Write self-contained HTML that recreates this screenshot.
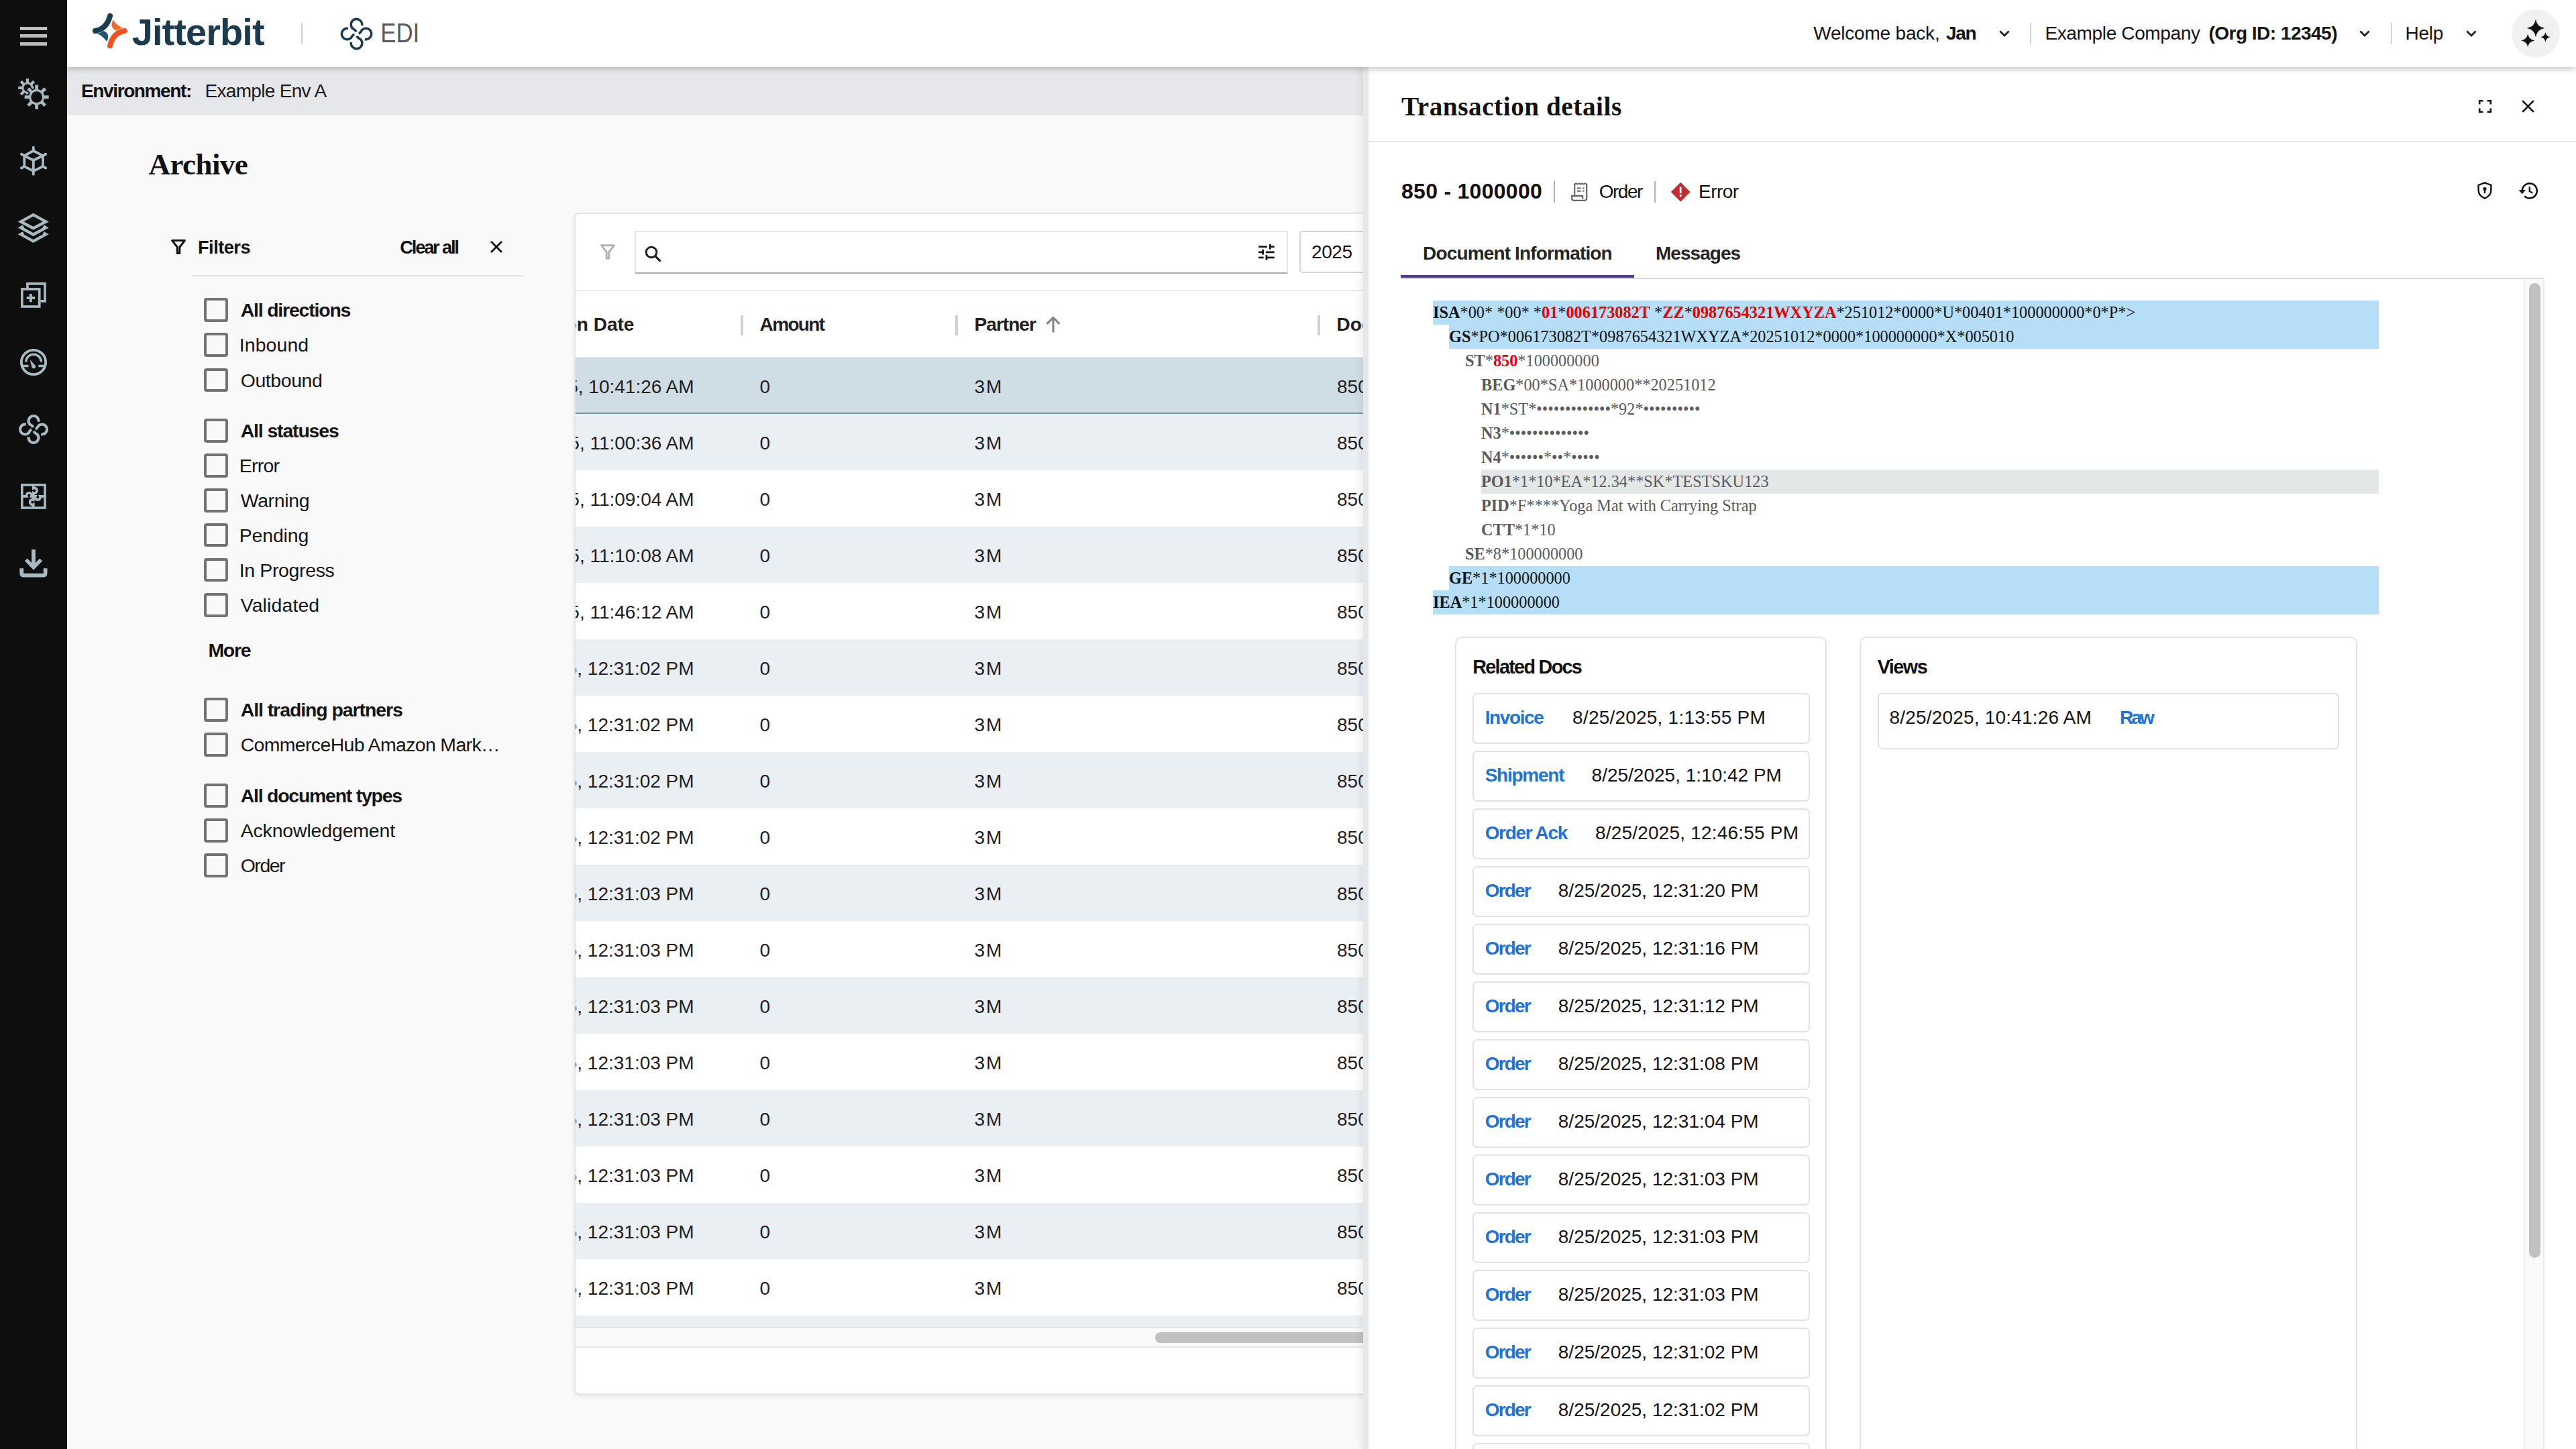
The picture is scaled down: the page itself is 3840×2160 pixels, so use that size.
<!DOCTYPE html><html><head><meta charset="utf-8"><style>
html,body{margin:0;padding:0;width:3840px;height:2160px;overflow:hidden;background:#f9f9f9;}
#root{zoom:2;position:relative;width:1920px;height:1080px;overflow:hidden;font-family:'Liberation Sans',sans-serif;color:#141414;background:#f9f9f9;}
.t{position:absolute;white-space:nowrap;line-height:1;}
svg{position:absolute;overflow:visible;}
</style></head><body><div id="root"><div style="position:absolute;left:0;top:0;width:50px;height:1080px;background:#0e0e0e;z-index:6"><div style="position:absolute;left:15px;top:20.0px;width:20px;height:2.5px;background:#bdbec0"></div><div style="position:absolute;left:15px;top:25.7px;width:20px;height:2.5px;background:#bdbec0"></div><div style="position:absolute;left:15px;top:31.4px;width:20px;height:2.5px;background:#bdbec0"></div><svg style="left:13px;top:58px" width="24" height="24" viewBox="0 0 24 24"><circle cx="7.47" cy="7.47" r="3.55" fill="none" stroke="#a7b9c1" stroke-width="1.5"/><rect x="6.42" y="0.5699999999999994" width="2.1" height="3.0000000000000004" fill="#a7b9c1" transform="rotate(0 7.47 7.47)"/><rect x="6.42" y="0.5699999999999994" width="2.1" height="3.0000000000000004" fill="#a7b9c1" transform="rotate(45 7.47 7.47)"/><rect x="6.42" y="0.5699999999999994" width="2.1" height="3.0000000000000004" fill="#a7b9c1" transform="rotate(90 7.47 7.47)"/><rect x="6.42" y="0.5699999999999994" width="2.1" height="3.0000000000000004" fill="#a7b9c1" transform="rotate(135 7.47 7.47)"/><rect x="6.42" y="0.5699999999999994" width="2.1" height="3.0000000000000004" fill="#a7b9c1" transform="rotate(180 7.47 7.47)"/><rect x="6.42" y="0.5699999999999994" width="2.1" height="3.0000000000000004" fill="#a7b9c1" transform="rotate(225 7.47 7.47)"/><rect x="6.42" y="0.5699999999999994" width="2.1" height="3.0000000000000004" fill="#a7b9c1" transform="rotate(270 7.47 7.47)"/><rect x="6.42" y="0.5699999999999994" width="2.1" height="3.0000000000000004" fill="#a7b9c1" transform="rotate(315 7.47 7.47)"/><circle cx="14.33" cy="14.33" r="6.73" fill="#0e0e0e"/><rect x="12.23" y="4.43" width="4.2" height="4.4" fill="#0e0e0e" transform="rotate(0 14.33 14.33)"/><rect x="12.23" y="4.43" width="4.2" height="4.4" fill="#0e0e0e" transform="rotate(45 14.33 14.33)"/><rect x="12.23" y="4.43" width="4.2" height="4.4" fill="#0e0e0e" transform="rotate(90 14.33 14.33)"/><rect x="12.23" y="4.43" width="4.2" height="4.4" fill="#0e0e0e" transform="rotate(135 14.33 14.33)"/><rect x="12.23" y="4.43" width="4.2" height="4.4" fill="#0e0e0e" transform="rotate(180 14.33 14.33)"/><rect x="12.23" y="4.43" width="4.2" height="4.4" fill="#0e0e0e" transform="rotate(225 14.33 14.33)"/><rect x="12.23" y="4.43" width="4.2" height="4.4" fill="#0e0e0e" transform="rotate(270 14.33 14.33)"/><rect x="12.23" y="4.43" width="4.2" height="4.4" fill="#0e0e0e" transform="rotate(315 14.33 14.33)"/><circle cx="14.33" cy="14.33" r="5.03" fill="none" stroke="#a7b9c1" stroke-width="1.6"/><rect x="13.13" y="5.33" width="2.4" height="3.5" fill="#a7b9c1" transform="rotate(0 14.33 14.33)"/><rect x="13.13" y="5.33" width="2.4" height="3.5" fill="#a7b9c1" transform="rotate(45 14.33 14.33)"/><rect x="13.13" y="5.33" width="2.4" height="3.5" fill="#a7b9c1" transform="rotate(90 14.33 14.33)"/><rect x="13.13" y="5.33" width="2.4" height="3.5" fill="#a7b9c1" transform="rotate(135 14.33 14.33)"/><rect x="13.13" y="5.33" width="2.4" height="3.5" fill="#a7b9c1" transform="rotate(180 14.33 14.33)"/><rect x="13.13" y="5.33" width="2.4" height="3.5" fill="#a7b9c1" transform="rotate(225 14.33 14.33)"/><rect x="13.13" y="5.33" width="2.4" height="3.5" fill="#a7b9c1" transform="rotate(270 14.33 14.33)"/><rect x="13.13" y="5.33" width="2.4" height="3.5" fill="#a7b9c1" transform="rotate(315 14.33 14.33)"/></svg><svg style="left:13px;top:108px" width="24" height="24" viewBox="0 0 24 24"><g fill="none" stroke="#a7b9c1" stroke-width="1.93" stroke-linejoin="miter"><path d="M11.9 4.4 L18.97 8.05 V16.07 L11.9 19.45 L5.15 16.07 V8.05 Z"/><path d="M5.15 8.05 L11.9 11.5 L18.97 8.05 M11.9 11.5 V19.45"/></g><g stroke="#a7b9c1" stroke-width="1.93" stroke-linecap="round"><path d="M11.9 4.4 V1.9 M18.97 8.05 L21.1 6.85 M18.97 16.07 L21.1 17.25 M11.9 19.45 V21.9 M5.15 16.07 L3.0 17.25 M5.15 8.05 L3.0 6.85"/></g></svg><svg style="left:13px;top:158px" width="24" height="24" viewBox="0 0 24 24"><g fill="none" stroke="#a7b9c1" stroke-width="2.15" stroke-linejoin="miter"><path d="M11.8 2.06 L21.2 7.2 L11.8 12.1 L2.54 7.2 Z"/><path d="M4.5 10.6 L2.54 11.72 L11.8 16.84 L21.2 11.72 L19.3 10.6"/><path d="M4.5 15.6 L2.54 16.65 L11.8 21.77 L21.2 16.65 L19.3 15.6"/></g></svg><svg style="left:13px;top:208px" width="24" height="24" viewBox="0 0 24 24"><g fill="none" stroke="#a7b9c1" stroke-width="1.84"><path d="M7.47 6.6 V3.41 H20.5 V16.45 H17.2"/><rect x="3.41" y="7.47" width="12.95" height="13.03"/></g><path d="M9.94 10.95 V17.13 M6.89 14.04 H13.07" stroke="#a7b9c1" stroke-width="1.93"/></svg><svg style="left:13px;top:258px" width="24" height="24" viewBox="0 0 24 24"><g fill="none" stroke="#a7b9c1" stroke-width="1.95"><circle cx="12" cy="12" r="9.07"/></g><path d="M6.3 11.8 A5.7 5.7 0 0 1 17.7 11.8" fill="none" stroke="#a7b9c1" stroke-width="1.74"/><path d="M3.2 14.8 H8.24 M15.68 14.8 H20.8" stroke="#a7b9c1" stroke-width="1.74"/><path d="M9.3 10.0 L13.45 14.6 A1.5 1.5 0 0 1 10.75 15.9 Z" fill="#a7b9c1"/></svg><svg style="left:13px;top:308px" width="24" height="24" viewBox="0 0 24 24"><path d="M15.67 6.38 A3.73 3.73 0 1 0 9.36 8.37 Q11.48 9.42 11.71 10.58" fill="none" stroke="#a7b9c1" stroke-width="2.0"/><path d="M6.38 8.33 A3.73 3.73 0 1 0 8.37 14.64 Q9.42 12.52 10.58 12.29" fill="none" stroke="#a7b9c1" stroke-width="2.0"/><path d="M8.33 17.62 A3.73 3.73 0 1 0 14.64 15.63 Q12.52 14.58 12.29 13.42" fill="none" stroke="#a7b9c1" stroke-width="2.0"/><path d="M17.62 15.67 A3.73 3.73 0 1 0 15.63 9.36 Q14.58 11.48 13.42 11.71" fill="none" stroke="#a7b9c1" stroke-width="2.0"/></svg><svg style="left:13px;top:358px" width="24" height="24" viewBox="0 0 24 24"><g fill="none" stroke="#a7b9c1" stroke-width="1.84"><rect x="3.41" y="3.41" width="17.09" height="17.09"/><path d="M11.9 3.41 V5.9 A1.9 1.9 0 1 1 11.9 9.4 V11.9 H10.4 A1.9 1.9 0 1 0 6.9 11.9 H3.41"/><path d="M11.9 20.5 V18.0 A1.9 1.9 0 1 1 11.9 14.5 V11.9 H13.4 A1.9 1.9 0 1 0 16.9 11.9 H20.5"/></g></svg><svg style="left:13px;top:408px" width="24" height="24" viewBox="0 0 24 24"><path d="M12 1.6 V13.5" stroke="#a7b9c1" stroke-width="2.9"/><path d="M6.4 9.2 L12 14.9 L17.6 9.2" fill="none" stroke="#a7b9c1" stroke-width="2.7" stroke-linejoin="miter"/><path d="M3.12 15.58 V19.2 Q3.12 20.8 4.7 20.8 H19.2 Q20.8 20.8 20.8 19.2 V15.58" fill="none" stroke="#a7b9c1" stroke-width="2.9"/></svg></div><div style="position:absolute;left:50px;top:0;width:1870px;height:50px;background:#fff;z-index:5;box-shadow:0 1px 5px rgba(0,0,0,.25)"><svg style="left:19.2px;top:9.9px" width="26" height="26" viewBox="0 0 26 26"><path d="M2.2 14.99 Q6.5 15.3 10.6 20.95 Q13.5 15.2 8.16 12.99 L2.0 11.0 Z" fill="#1f5573"/><path d="M23.66 10.89 Q19.36 10.58 15.26 4.93 Q12.36 10.68 17.7 12.89 L23.86 14.88 Z" fill="#f26a2c"/><path d="M13.02 1.85 Q10.6 11.5 1.98 12.99" fill="none" stroke="#fff" stroke-width="4.5" stroke-linecap="round"/><path d="M13.02 1.85 Q10.6 11.5 1.98 12.99" fill="none" stroke="#1c3c51" stroke-width="4.0" stroke-linecap="round"/><path d="M23.84 12.99 Q15.26 14.38 13.02 24.04" fill="none" stroke="#fff" stroke-width="4.5" stroke-linecap="round"/><path d="M23.84 12.99 Q15.26 14.38 13.02 24.04" fill="none" stroke="#f0521f" stroke-width="4.0" stroke-linecap="round"/></svg><span class="t" style="left:48.35px;top:9.84px;font-size:28px;font-weight:bold;color:#1b3a4e;font-family:'Liberation Sans',sans-serif;letter-spacing:-0.463px;">Jitterbit</span><div style="position:absolute;left:174.30px;top:17.00px;width:1.00px;height:16.00px;background:#d0d0d0"></div><svg style="left:202.3px;top:12.1px" width="26.5" height="26.5" viewBox="0 0 24 24"><path d="M15.67 6.38 A3.73 3.73 0 1 0 9.36 8.37 Q11.48 9.42 11.71 10.58" fill="none" stroke="#1c3a4e" stroke-width="1.6"/><path d="M6.38 8.33 A3.73 3.73 0 1 0 8.37 14.64 Q9.42 12.52 10.58 12.29" fill="none" stroke="#1c3a4e" stroke-width="1.6"/><path d="M8.33 17.62 A3.73 3.73 0 1 0 14.64 15.63 Q12.52 14.58 12.29 13.42" fill="none" stroke="#1c3a4e" stroke-width="1.6"/><path d="M17.62 15.67 A3.73 3.73 0 1 0 15.63 9.36 Q14.58 11.48 13.42 11.71" fill="none" stroke="#1c3a4e" stroke-width="1.6"/></svg><span class="t" style="left:233.30px;top:14.61px;font-size:20.7px;color:#58595b;font-family:'Liberation Sans',sans-serif;transform:scaleX(0.8397);transform-origin:1.00px 0;">EDI</span><span class="t" style="left:1301.60px;top:18.17px;font-size:14px;color:#141414;font-family:'Liberation Sans',sans-serif;letter-spacing:-0.100px;">Welcome back,</span><span class="t" style="left:1400.50px;top:18.17px;font-size:14px;font-weight:bold;color:#141414;font-family:'Liberation Sans',sans-serif;letter-spacing:-0.686px;">Jan</span><svg style="left:1440px;top:22.5px" width="8" height="5" viewBox="0 0 8 5"><path d="M0.7 0.7 L4 4 L7.3 0.7" fill="none" stroke="#222" stroke-width="1.4"/></svg><div style="position:absolute;left:1463.20px;top:17.00px;width:1.00px;height:16.00px;background:#d4d4d4"></div><span class="t" style="left:1474.20px;top:18.17px;font-size:14px;color:#141414;font-family:'Liberation Sans',sans-serif;letter-spacing:-0.177px;">Example Company</span><span class="t" style="left:1596.20px;top:18.17px;font-size:14px;font-weight:bold;color:#141414;font-family:'Liberation Sans',sans-serif;letter-spacing:-0.252px;">(Org ID: 12345)</span><svg style="left:1708.5px;top:22.5px" width="8" height="5" viewBox="0 0 8 5"><path d="M0.7 0.7 L4 4 L7.3 0.7" fill="none" stroke="#222" stroke-width="1.4"/></svg><div style="position:absolute;left:1732.10px;top:17.00px;width:1.00px;height:16.00px;background:#d4d4d4"></div><span class="t" style="left:1742.80px;top:18.17px;font-size:14px;color:#141414;font-family:'Liberation Sans',sans-serif;letter-spacing:-0.152px;">Help</span><svg style="left:1788px;top:22.5px" width="8" height="5" viewBox="0 0 8 5"><path d="M0.7 0.7 L4 4 L7.3 0.7" fill="none" stroke="#222" stroke-width="1.4"/></svg><div style="position:absolute;left:1822.00px;top:7.00px;width:36.00px;height:36.00px;border-radius:50%;background:#f1f1f1"></div><svg style="left:1827px;top:12px" width="26" height="26" viewBox="0 0 26 26"><path fill="#111" d="M13.00 2.40 Q13.92 8.08 19.60 9.00 Q13.92 9.92 13.00 15.60 Q12.08 9.92 6.40 9.00 Q12.08 8.08 13.00 2.40 Z M7.10 13.30 Q7.80 17.60 12.10 18.30 Q7.80 19.00 7.10 23.30 Q6.40 19.00 2.10 18.30 Q6.40 17.60 7.10 13.30 Z M20.20 11.95 Q20.72 15.13 23.90 15.65 Q20.72 16.17 20.20 19.35 Q19.68 16.17 16.50 15.65 Q19.68 15.13 20.20 11.95 Z "/></svg></div><div style="position:absolute;left:50px;top:50px;width:1870px;height:36px;background:#e6e7ea;z-index:1"><span class="t" style="left:10.50px;top:11.17px;font-size:14px;font-weight:bold;color:#111;font-family:'Liberation Sans',sans-serif;letter-spacing:-0.688px;">Environment:</span><span class="t" style="left:102.75px;top:11.17px;font-size:14px;color:#1a1a1a;font-family:'Liberation Sans',sans-serif;letter-spacing:-0.344px;">Example Env A</span></div><span class="t" style="left:110.75px;top:111.36px;font-size:22.5px;font-weight:bold;color:#111;font-family:'Liberation Serif',serif;letter-spacing:-0.280px;">Archive</span><svg style="left:127.6px;top:178.6px" width="11" height="11" viewBox="0 0 11 11"><path d="M0.8 0.8 H10.2 L6.4 5.6 V10.2 H4.6 V5.6 Z" fill="none" stroke="#111" stroke-width="1.5" stroke-linejoin="round"/></svg><span class="t" style="left:147.50px;top:177.41px;font-size:13.6px;font-weight:bold;color:#111;font-family:'Liberation Sans',sans-serif;letter-spacing:-0.256px;">Filters</span><span class="t" style="left:298.15px;top:177.41px;font-size:13.6px;font-weight:bold;color:#111;font-family:'Liberation Sans',sans-serif;letter-spacing:-1.077px;">Clear all</span><svg style="left:365.6px;top:179.6px" width="9" height="9" viewBox="0 0 9 9"><path d="M0.5 0.5 L8.5 8.5 M8.5 0.5 L0.5 8.5" stroke="#111" stroke-width="1.3"/></svg><div style="position:absolute;left:143.00px;top:205.00px;width:247.00px;height:1.00px;background:#dfe2e3"></div><div style="position:absolute;left:152.15px;top:222.10px;width:17.75px;height:17.75px;box-sizing:border-box;border:2px solid #737373;border-radius:2px"></div><span class="t" style="left:179.35px;top:224.20px;font-size:14.2px;font-weight:bold;color:#141414;font-family:'Liberation Sans',sans-serif;letter-spacing:-0.583px;">All directions</span><div style="position:absolute;left:152.15px;top:248.10px;width:17.75px;height:17.75px;box-sizing:border-box;border:2px solid #737373;border-radius:2px"></div><span class="t" style="left:178.35px;top:250.20px;font-size:14.2px;color:#141414;font-family:'Liberation Sans',sans-serif;letter-spacing:0.068px;">Inbound</span><div style="position:absolute;left:152.15px;top:274.35px;width:17.75px;height:17.75px;box-sizing:border-box;border:2px solid #737373;border-radius:2px"></div><span class="t" style="left:179.35px;top:276.45px;font-size:14.2px;color:#141414;font-family:'Liberation Sans',sans-serif;letter-spacing:-0.190px;">Outbound</span><div style="position:absolute;left:152.15px;top:312.10px;width:17.75px;height:17.75px;box-sizing:border-box;border:2px solid #737373;border-radius:2px"></div><span class="t" style="left:179.35px;top:314.20px;font-size:14.2px;font-weight:bold;color:#141414;font-family:'Liberation Sans',sans-serif;letter-spacing:-0.559px;">All statuses</span><div style="position:absolute;left:152.15px;top:338.10px;width:17.75px;height:17.75px;box-sizing:border-box;border:2px solid #737373;border-radius:2px"></div><span class="t" style="left:178.35px;top:340.20px;font-size:14.2px;color:#141414;font-family:'Liberation Sans',sans-serif;letter-spacing:-0.351px;">Error</span><div style="position:absolute;left:152.15px;top:364.10px;width:17.75px;height:17.75px;box-sizing:border-box;border:2px solid #737373;border-radius:2px"></div><span class="t" style="left:179.35px;top:366.20px;font-size:14.2px;color:#141414;font-family:'Liberation Sans',sans-serif;letter-spacing:-0.152px;">Warning</span><div style="position:absolute;left:152.15px;top:389.85px;width:17.75px;height:17.75px;box-sizing:border-box;border:2px solid #737373;border-radius:2px"></div><span class="t" style="left:178.35px;top:391.95px;font-size:14.2px;color:#141414;font-family:'Liberation Sans',sans-serif;letter-spacing:-0.046px;">Pending</span><div style="position:absolute;left:152.15px;top:415.95px;width:17.75px;height:17.75px;box-sizing:border-box;border:2px solid #737373;border-radius:2px"></div><span class="t" style="left:178.35px;top:418.05px;font-size:14.2px;color:#141414;font-family:'Liberation Sans',sans-serif;letter-spacing:-0.155px;">In Progress</span><div style="position:absolute;left:152.15px;top:442.10px;width:17.75px;height:17.75px;box-sizing:border-box;border:2px solid #737373;border-radius:2px"></div><span class="t" style="left:179.35px;top:444.20px;font-size:14.2px;color:#141414;font-family:'Liberation Sans',sans-serif;letter-spacing:0.073px;">Validated</span><div style="position:absolute;left:152.15px;top:520.10px;width:17.75px;height:17.75px;box-sizing:border-box;border:2px solid #737373;border-radius:2px"></div><span class="t" style="left:179.35px;top:522.20px;font-size:14.2px;font-weight:bold;color:#141414;font-family:'Liberation Sans',sans-serif;letter-spacing:-0.519px;">All trading partners</span><div style="position:absolute;left:152.15px;top:546.10px;width:17.75px;height:17.75px;box-sizing:border-box;border:2px solid #737373;border-radius:2px"></div><span class="t" style="left:179.35px;top:548.20px;font-size:14.2px;color:#141414;font-family:'Liberation Sans',sans-serif;letter-spacing:-0.305px;">CommerceHub Amazon Mark…</span><div style="position:absolute;left:152.15px;top:584.10px;width:17.75px;height:17.75px;box-sizing:border-box;border:2px solid #737373;border-radius:2px"></div><span class="t" style="left:179.35px;top:586.20px;font-size:14.2px;font-weight:bold;color:#141414;font-family:'Liberation Sans',sans-serif;letter-spacing:-0.601px;">All document types</span><div style="position:absolute;left:152.15px;top:610.10px;width:17.75px;height:17.75px;box-sizing:border-box;border:2px solid #737373;border-radius:2px"></div><span class="t" style="left:179.35px;top:612.20px;font-size:14.2px;color:#141414;font-family:'Liberation Sans',sans-serif;letter-spacing:-0.056px;">Acknowledgement</span><div style="position:absolute;left:152.15px;top:636.10px;width:17.75px;height:17.75px;box-sizing:border-box;border:2px solid #737373;border-radius:2px"></div><span class="t" style="left:179.35px;top:638.20px;font-size:14.2px;color:#141414;font-family:'Liberation Sans',sans-serif;letter-spacing:-0.710px;">Order</span><span class="t" style="left:155.25px;top:477.50px;font-size:14.2px;font-weight:bold;color:#111;font-family:'Liberation Sans',sans-serif;letter-spacing:-0.652px;">More</span><div style="position:absolute;left:427.8px;top:158.55px;width:700px;height:880.75px;box-sizing:border-box;border:1px solid #e3e5e8;background:#fff;border-radius:3.5px;box-shadow:0 1px 3px rgba(0,0,0,.09);overflow:hidden;z-index:1"><svg style="left:18.7px;top:22.45px" width="11" height="11.5" viewBox="0 0 11 11.5"><path d="M0.8 0.9 H10.2 L6.4 5.8 V10.6 H4.6 V5.8 Z" fill="none" stroke="#b3b3b3" stroke-width="1.5" stroke-linejoin="round"/></svg><div style="position:absolute;left:44.30px;top:12.55px;width:487.00px;height:31.80px;box-sizing:border-box;border:1px solid #e3e5e8;border-bottom:1px solid #a9abae"></div><svg style="left:51.7px;top:23.25px" width="13" height="13" viewBox="0 0 13 13"><circle cx="5" cy="5" r="3.9" fill="none" stroke="#1f1f1f" stroke-width="1.5"/><path d="M7.8 7.8 L11.8 11.8" stroke="#1f1f1f" stroke-width="1.6"/></svg><svg style="left:508.7px;top:22.45px" width="13" height="12" viewBox="0 0 13 12" fill="#111"><rect x="0.58" y="1.23" width="6.42" height="1.35"/><rect x="9.9" y="1.23" width="2.48" height="1.35"/><rect x="8.5" y="0.05" width="1.35" height="3.8"/><rect x="0.58" y="5.27" width="3.1" height="1.35"/><rect x="5.96" y="5.27" width="6.42" height="1.35"/><rect x="3.12" y="3.97" width="1.35" height="3.83"/><rect x="0.58" y="9.3" width="3.72" height="1.35"/><rect x="7.0" y="9.3" width="5.38" height="1.35"/><rect x="5.8" y="8.0" width="1.35" height="3.84"/></svg><div style="position:absolute;left:539.50px;top:12.55px;width:200.00px;height:31.60px;box-sizing:border-box;border:1px solid #d4d6d9;border-radius:2.5px"></div><span class="t" style="left:548.70px;top:21.32px;font-size:14px;color:#141414;font-family:'Liberation Sans',sans-serif;letter-spacing:-0.203px;">2025</span><div style="position:absolute;left:-1.00px;top:56.45px;width:700.00px;height:1.00px;background:#e6e8ea"></div><span class="t" style="right:654.10px;top:75.62px;font-size:14px;font-weight:bold;color:#1f1f1f;font-family:'Liberation Sans',sans-serif;">Transaction Date</span><div style="position:absolute;left:123.05px;top:75.45px;width:2.00px;height:14.80px;background:#d2d2d2"></div><div style="position:absolute;left:283.00px;top:75.45px;width:2.00px;height:14.80px;background:#d2d2d2"></div><div style="position:absolute;left:553.10px;top:75.45px;width:2.00px;height:14.80px;background:#d2d2d2"></div><span class="t" style="left:137.50px;top:75.62px;font-size:14px;font-weight:bold;color:#1f1f1f;font-family:'Liberation Sans',sans-serif;letter-spacing:-0.833px;">Amount</span><span class="t" style="left:297.50px;top:75.62px;font-size:14px;font-weight:bold;color:#1f1f1f;font-family:'Liberation Sans',sans-serif;letter-spacing:-0.487px;">Partner</span><svg style="left:350.4px;top:76.15px" width="12" height="12.5" viewBox="0 0 12 12.5"><path d="M6 12.3 V1.3 M1.3 5.9 L6 1.2 L10.7 5.9" fill="none" stroke="#888" stroke-width="1.6"/></svg><span class="t" style="left:567.50px;top:75.62px;font-size:14px;font-weight:bold;color:#1f1f1f;font-family:'Liberation Sans',sans-serif;">Document</span><div style="position:absolute;left:-1.00px;top:107.15px;width:700.00px;height:42.00px;background:#cfdee5;border-bottom:1px solid #7492a0;box-sizing:border-box"></div><span class="t" style="right:609.50px;top:121.82px;font-size:14px;color:#1f1f1f;font-family:'Liberation Sans',sans-serif;">8/25/2025, 10:41:26 AM</span><span class="t" style="left:137.50px;top:121.82px;font-size:14px;color:#1f1f1f;font-family:'Liberation Sans',sans-serif;">0</span><span class="t" style="left:297.50px;top:121.82px;font-size:14px;color:#1f1f1f;font-family:'Liberation Sans',sans-serif;letter-spacing:0.914px;">3M</span><span class="t" style="left:567.70px;top:121.82px;font-size:14px;color:#1f1f1f;font-family:'Liberation Sans',sans-serif;">850 - 1000000</span><div style="position:absolute;left:-1.00px;top:149.15px;width:700.00px;height:42.00px;background:#e9eff2"></div><span class="t" style="right:609.50px;top:163.82px;font-size:14px;color:#1f1f1f;font-family:'Liberation Sans',sans-serif;">8/25/2025, 11:00:36 AM</span><span class="t" style="left:137.50px;top:163.82px;font-size:14px;color:#1f1f1f;font-family:'Liberation Sans',sans-serif;">0</span><span class="t" style="left:297.50px;top:163.82px;font-size:14px;color:#1f1f1f;font-family:'Liberation Sans',sans-serif;letter-spacing:0.914px;">3M</span><span class="t" style="left:567.70px;top:163.82px;font-size:14px;color:#1f1f1f;font-family:'Liberation Sans',sans-serif;">850 - 1000000</span><div style="position:absolute;left:-1.00px;top:191.15px;width:700.00px;height:42.00px;background:#fff"></div><span class="t" style="right:609.50px;top:205.82px;font-size:14px;color:#1f1f1f;font-family:'Liberation Sans',sans-serif;">8/25/2025, 11:09:04 AM</span><span class="t" style="left:137.50px;top:205.82px;font-size:14px;color:#1f1f1f;font-family:'Liberation Sans',sans-serif;">0</span><span class="t" style="left:297.50px;top:205.82px;font-size:14px;color:#1f1f1f;font-family:'Liberation Sans',sans-serif;letter-spacing:0.914px;">3M</span><span class="t" style="left:567.70px;top:205.82px;font-size:14px;color:#1f1f1f;font-family:'Liberation Sans',sans-serif;">850 - 1000000</span><div style="position:absolute;left:-1.00px;top:233.15px;width:700.00px;height:42.00px;background:#e9eff2"></div><span class="t" style="right:609.50px;top:247.82px;font-size:14px;color:#1f1f1f;font-family:'Liberation Sans',sans-serif;">8/25/2025, 11:10:08 AM</span><span class="t" style="left:137.50px;top:247.82px;font-size:14px;color:#1f1f1f;font-family:'Liberation Sans',sans-serif;">0</span><span class="t" style="left:297.50px;top:247.82px;font-size:14px;color:#1f1f1f;font-family:'Liberation Sans',sans-serif;letter-spacing:0.914px;">3M</span><span class="t" style="left:567.70px;top:247.82px;font-size:14px;color:#1f1f1f;font-family:'Liberation Sans',sans-serif;">850 - 1000000</span><div style="position:absolute;left:-1.00px;top:275.15px;width:700.00px;height:42.00px;background:#fff"></div><span class="t" style="right:609.50px;top:289.82px;font-size:14px;color:#1f1f1f;font-family:'Liberation Sans',sans-serif;">8/25/2025, 11:46:12 AM</span><span class="t" style="left:137.50px;top:289.82px;font-size:14px;color:#1f1f1f;font-family:'Liberation Sans',sans-serif;">0</span><span class="t" style="left:297.50px;top:289.82px;font-size:14px;color:#1f1f1f;font-family:'Liberation Sans',sans-serif;letter-spacing:0.914px;">3M</span><span class="t" style="left:567.70px;top:289.82px;font-size:14px;color:#1f1f1f;font-family:'Liberation Sans',sans-serif;">850 - 1000000</span><div style="position:absolute;left:-1.00px;top:317.15px;width:700.00px;height:42.00px;background:#e9eff2"></div><span class="t" style="right:609.50px;top:331.82px;font-size:14px;color:#1f1f1f;font-family:'Liberation Sans',sans-serif;">8/25/2025, 12:31:02 PM</span><span class="t" style="left:137.50px;top:331.82px;font-size:14px;color:#1f1f1f;font-family:'Liberation Sans',sans-serif;">0</span><span class="t" style="left:297.50px;top:331.82px;font-size:14px;color:#1f1f1f;font-family:'Liberation Sans',sans-serif;letter-spacing:0.914px;">3M</span><span class="t" style="left:567.70px;top:331.82px;font-size:14px;color:#1f1f1f;font-family:'Liberation Sans',sans-serif;">850 - 1000000</span><div style="position:absolute;left:-1.00px;top:359.15px;width:700.00px;height:42.00px;background:#fff"></div><span class="t" style="right:609.50px;top:373.82px;font-size:14px;color:#1f1f1f;font-family:'Liberation Sans',sans-serif;">8/25/2025, 12:31:02 PM</span><span class="t" style="left:137.50px;top:373.82px;font-size:14px;color:#1f1f1f;font-family:'Liberation Sans',sans-serif;">0</span><span class="t" style="left:297.50px;top:373.82px;font-size:14px;color:#1f1f1f;font-family:'Liberation Sans',sans-serif;letter-spacing:0.914px;">3M</span><span class="t" style="left:567.70px;top:373.82px;font-size:14px;color:#1f1f1f;font-family:'Liberation Sans',sans-serif;">850 - 1000000</span><div style="position:absolute;left:-1.00px;top:401.15px;width:700.00px;height:42.00px;background:#e9eff2"></div><span class="t" style="right:609.50px;top:415.82px;font-size:14px;color:#1f1f1f;font-family:'Liberation Sans',sans-serif;">8/25/2025, 12:31:02 PM</span><span class="t" style="left:137.50px;top:415.82px;font-size:14px;color:#1f1f1f;font-family:'Liberation Sans',sans-serif;">0</span><span class="t" style="left:297.50px;top:415.82px;font-size:14px;color:#1f1f1f;font-family:'Liberation Sans',sans-serif;letter-spacing:0.914px;">3M</span><span class="t" style="left:567.70px;top:415.82px;font-size:14px;color:#1f1f1f;font-family:'Liberation Sans',sans-serif;">850 - 1000000</span><div style="position:absolute;left:-1.00px;top:443.15px;width:700.00px;height:42.00px;background:#fff"></div><span class="t" style="right:609.50px;top:457.82px;font-size:14px;color:#1f1f1f;font-family:'Liberation Sans',sans-serif;">8/25/2025, 12:31:02 PM</span><span class="t" style="left:137.50px;top:457.82px;font-size:14px;color:#1f1f1f;font-family:'Liberation Sans',sans-serif;">0</span><span class="t" style="left:297.50px;top:457.82px;font-size:14px;color:#1f1f1f;font-family:'Liberation Sans',sans-serif;letter-spacing:0.914px;">3M</span><span class="t" style="left:567.70px;top:457.82px;font-size:14px;color:#1f1f1f;font-family:'Liberation Sans',sans-serif;">850 - 1000000</span><div style="position:absolute;left:-1.00px;top:485.15px;width:700.00px;height:42.00px;background:#e9eff2"></div><span class="t" style="right:609.50px;top:499.82px;font-size:14px;color:#1f1f1f;font-family:'Liberation Sans',sans-serif;">8/25/2025, 12:31:03 PM</span><span class="t" style="left:137.50px;top:499.82px;font-size:14px;color:#1f1f1f;font-family:'Liberation Sans',sans-serif;">0</span><span class="t" style="left:297.50px;top:499.82px;font-size:14px;color:#1f1f1f;font-family:'Liberation Sans',sans-serif;letter-spacing:0.914px;">3M</span><span class="t" style="left:567.70px;top:499.82px;font-size:14px;color:#1f1f1f;font-family:'Liberation Sans',sans-serif;">850 - 1000000</span><div style="position:absolute;left:-1.00px;top:527.15px;width:700.00px;height:42.00px;background:#fff"></div><span class="t" style="right:609.50px;top:541.82px;font-size:14px;color:#1f1f1f;font-family:'Liberation Sans',sans-serif;">8/25/2025, 12:31:03 PM</span><span class="t" style="left:137.50px;top:541.82px;font-size:14px;color:#1f1f1f;font-family:'Liberation Sans',sans-serif;">0</span><span class="t" style="left:297.50px;top:541.82px;font-size:14px;color:#1f1f1f;font-family:'Liberation Sans',sans-serif;letter-spacing:0.914px;">3M</span><span class="t" style="left:567.70px;top:541.82px;font-size:14px;color:#1f1f1f;font-family:'Liberation Sans',sans-serif;">850 - 1000000</span><div style="position:absolute;left:-1.00px;top:569.15px;width:700.00px;height:42.00px;background:#e9eff2"></div><span class="t" style="right:609.50px;top:583.82px;font-size:14px;color:#1f1f1f;font-family:'Liberation Sans',sans-serif;">8/25/2025, 12:31:03 PM</span><span class="t" style="left:137.50px;top:583.82px;font-size:14px;color:#1f1f1f;font-family:'Liberation Sans',sans-serif;">0</span><span class="t" style="left:297.50px;top:583.82px;font-size:14px;color:#1f1f1f;font-family:'Liberation Sans',sans-serif;letter-spacing:0.914px;">3M</span><span class="t" style="left:567.70px;top:583.82px;font-size:14px;color:#1f1f1f;font-family:'Liberation Sans',sans-serif;">850 - 1000000</span><div style="position:absolute;left:-1.00px;top:611.15px;width:700.00px;height:42.00px;background:#fff"></div><span class="t" style="right:609.50px;top:625.82px;font-size:14px;color:#1f1f1f;font-family:'Liberation Sans',sans-serif;">8/25/2025, 12:31:03 PM</span><span class="t" style="left:137.50px;top:625.82px;font-size:14px;color:#1f1f1f;font-family:'Liberation Sans',sans-serif;">0</span><span class="t" style="left:297.50px;top:625.82px;font-size:14px;color:#1f1f1f;font-family:'Liberation Sans',sans-serif;letter-spacing:0.914px;">3M</span><span class="t" style="left:567.70px;top:625.82px;font-size:14px;color:#1f1f1f;font-family:'Liberation Sans',sans-serif;">850 - 1000000</span><div style="position:absolute;left:-1.00px;top:653.15px;width:700.00px;height:42.00px;background:#e9eff2"></div><span class="t" style="right:609.50px;top:667.82px;font-size:14px;color:#1f1f1f;font-family:'Liberation Sans',sans-serif;">8/25/2025, 12:31:03 PM</span><span class="t" style="left:137.50px;top:667.82px;font-size:14px;color:#1f1f1f;font-family:'Liberation Sans',sans-serif;">0</span><span class="t" style="left:297.50px;top:667.82px;font-size:14px;color:#1f1f1f;font-family:'Liberation Sans',sans-serif;letter-spacing:0.914px;">3M</span><span class="t" style="left:567.70px;top:667.82px;font-size:14px;color:#1f1f1f;font-family:'Liberation Sans',sans-serif;">850 - 1000000</span><div style="position:absolute;left:-1.00px;top:695.15px;width:700.00px;height:42.00px;background:#fff"></div><span class="t" style="right:609.50px;top:709.82px;font-size:14px;color:#1f1f1f;font-family:'Liberation Sans',sans-serif;">8/25/2025, 12:31:03 PM</span><span class="t" style="left:137.50px;top:709.82px;font-size:14px;color:#1f1f1f;font-family:'Liberation Sans',sans-serif;">0</span><span class="t" style="left:297.50px;top:709.82px;font-size:14px;color:#1f1f1f;font-family:'Liberation Sans',sans-serif;letter-spacing:0.914px;">3M</span><span class="t" style="left:567.70px;top:709.82px;font-size:14px;color:#1f1f1f;font-family:'Liberation Sans',sans-serif;">850 - 1000000</span><div style="position:absolute;left:-1.00px;top:737.15px;width:700.00px;height:42.00px;background:#e9eff2"></div><span class="t" style="right:609.50px;top:751.82px;font-size:14px;color:#1f1f1f;font-family:'Liberation Sans',sans-serif;">8/25/2025, 12:31:03 PM</span><span class="t" style="left:137.50px;top:751.82px;font-size:14px;color:#1f1f1f;font-family:'Liberation Sans',sans-serif;">0</span><span class="t" style="left:297.50px;top:751.82px;font-size:14px;color:#1f1f1f;font-family:'Liberation Sans',sans-serif;letter-spacing:0.914px;">3M</span><span class="t" style="left:567.70px;top:751.82px;font-size:14px;color:#1f1f1f;font-family:'Liberation Sans',sans-serif;">850 - 1000000</span><div style="position:absolute;left:-1.00px;top:779.15px;width:700.00px;height:42.00px;background:#fff"></div><span class="t" style="right:609.50px;top:793.82px;font-size:14px;color:#1f1f1f;font-family:'Liberation Sans',sans-serif;">8/25/2025, 12:31:03 PM</span><span class="t" style="left:137.50px;top:793.82px;font-size:14px;color:#1f1f1f;font-family:'Liberation Sans',sans-serif;">0</span><span class="t" style="left:297.50px;top:793.82px;font-size:14px;color:#1f1f1f;font-family:'Liberation Sans',sans-serif;letter-spacing:0.914px;">3M</span><span class="t" style="left:567.70px;top:793.82px;font-size:14px;color:#1f1f1f;font-family:'Liberation Sans',sans-serif;">850 - 1000000</span><div style="position:absolute;left:-1.00px;top:106.35px;width:700.00px;height:1.00px;background:#e1e3e6"></div><div style="position:absolute;left:-1.00px;top:821.15px;width:700.00px;height:8.45px;background:#e9eff2"></div><div style="position:absolute;left:-1.00px;top:829.60px;width:700.00px;height:1.00px;background:#e6e6e6"></div><div style="position:absolute;left:-1.00px;top:830.60px;width:700.00px;height:13.30px;background:#f9f9f9"></div><div style="position:absolute;left:432.20px;top:833.45px;width:400.00px;height:8.00px;border-radius:4px;background:#c1c1c1"></div><div style="position:absolute;left:-1.00px;top:843.90px;width:700.00px;height:1.00px;background:#e8e8e8"></div></div><div style="position:absolute;left:1016px;top:50px;width:904px;height:1030px;z-index:3;background:#fff"><div style="position:absolute;left:0;top:0;width:4px;height:1030px;background:#e6e7e9;box-shadow:-2px 0 5px rgba(0,0,0,.08)"></div><span class="t" style="left:28.50px;top:19.63px;font-size:19.6px;font-weight:bold;color:#111;font-family:'Liberation Serif',serif;letter-spacing:0.276px;">Transaction details</span><svg style="left:831.3px;top:24.3px" width="9.5" height="9.5" viewBox="0 0 9.5 9.5"><path d="M0.6 3.2 V0.6 H3.2 M6.3 0.6 H8.9 V3.2 M8.9 6.3 V8.9 H6.3 M3.2 8.9 H0.6 V6.3" fill="none" stroke="#111" stroke-width="1.3"/></svg><svg style="left:863.5px;top:24.3px" width="9.5" height="9.5" viewBox="0 0 9.5 9.5"><path d="M0.6 0.6 L8.9 8.9 M8.9 0.6 L0.6 8.9" stroke="#111" stroke-width="1.3"/></svg><div style="position:absolute;left:4.00px;top:55.00px;width:900.00px;height:1.00px;background:#e3e5e8"></div><span class="t" style="left:28.50px;top:84.48px;font-size:16px;font-weight:bold;color:#111;font-family:'Liberation Sans',sans-serif;letter-spacing:0.141px;">850 - 1000000</span><div style="position:absolute;left:141.90px;top:85.00px;width:1.00px;height:15.80px;background:#a7b6bd"></div><svg style="left:154.85px;top:86.4px" width="12.5" height="13.4" viewBox="0 0 12.5 13.4"><path d="M2.6 9.6 V0.8 L3.7 0.2 L4.8 0.8 L5.9 0.2 L7 0.8 L8.1 0.2 L9.2 0.8 L10.3 0.2 L11.6 0.8 V11.4 Q11.6 12.9 10.1 12.9 H2 Q0.6 12.9 0.6 11.4 V9.6 H8.6 V11.6" fill="none" stroke="#666" stroke-width="1.1"/><path d="M4.4 3.7 H7.4 M8.6 3.7 H9.8 M4.4 5.9 H7.4 M8.6 5.9 H9.8" stroke="#666" stroke-width="1"/></svg><span class="t" style="left:175.85px;top:86.17px;font-size:14px;color:#111;font-family:'Liberation Sans',sans-serif;letter-spacing:-0.744px;">Order</span><div style="position:absolute;left:217.00px;top:85.00px;width:1.00px;height:15.80px;background:#a7b6bd"></div><svg style="left:229.3px;top:85.85px" width="14.2" height="14.2" viewBox="0 0 14.2 14.2"><path d="M7.1 0.3 L13.9 7.1 L7.1 13.9 L0.3 7.1 Z" fill="#c62a2f" stroke="#c62a2f" stroke-width="0.6" stroke-linejoin="round"/><rect x="6.4" y="3.3" width="1.4" height="4.8" fill="#fff"/><rect x="6.4" y="9.1" width="1.4" height="1.5" fill="#fff"/></svg><span class="t" style="left:250.00px;top:86.17px;font-size:14px;color:#111;font-family:'Liberation Sans',sans-serif;letter-spacing:-0.262px;">Error</span><svg style="left:830.5px;top:85.4px" width="11" height="13" viewBox="0 0 11 13"><path d="M5.5 0.7 L10.2 2.5 V6.2 Q10.2 10.3 5.5 12.3 Q0.8 10.3 0.8 6.2 V2.5 Z" fill="none" stroke="#111" stroke-width="1.2"/><circle cx="5.5" cy="5.2" r="1.25" fill="#111"/><rect x="4.9" y="5.6" width="1.2" height="3" fill="#111"/></svg><svg style="left:861px;top:86px" width="14" height="12.5" viewBox="0 0 14 12.5"><path d="M2.9 6.2 A5.5 5.5 0 1 1 4.6 10.2" fill="none" stroke="#111" stroke-width="1.3"/><path d="M0.3 5.6 L2.9 8.6 L5.5 5.6 Z" fill="#111"/><path d="M8.4 3.3 V6.5 L10.6 7.9" fill="none" stroke="#111" stroke-width="1.2"/></svg><span class="t" style="left:44.50px;top:132.17px;font-size:14px;font-weight:bold;color:#252525;font-family:'Liberation Sans',sans-serif;letter-spacing:-0.420px;">Document Information</span><span class="t" style="left:218.00px;top:132.17px;font-size:14px;font-weight:bold;color:#252525;font-family:'Liberation Sans',sans-serif;letter-spacing:-0.478px;">Messages</span><div style="position:absolute;left:28.00px;top:157.00px;width:852.00px;height:1.00px;background:#d6d8da"></div><div style="position:absolute;left:28.00px;top:154.90px;width:174.00px;height:2.10px;background:#58398d"></div><div style="position:absolute;left:865.00px;top:158.00px;width:15.30px;height:880.00px;background:#f9f9f9;border-left:1px solid #ebebeb;border-right:1px solid #ebebeb;box-sizing:border-box"></div><div style="position:absolute;left:869.00px;top:161.00px;width:8.50px;height:726.30px;border-radius:4.25px;background:#c1c1c1"></div><div style="position:absolute;left:52px;top:174px;width:705px;height:18px;line-height:18px;font-family:'Liberation Serif',serif;font-size:12.15px;white-space:nowrap;color:#111;background:#b6def6;"><b style="color:#111">ISA</b>*00* *00* *<b style="color:#ee0000">01</b>*<b style="color:#ee0000">006173082T</b> *<b style="color:#ee0000">ZZ</b>*<b style="color:#ee0000">0987654321WXYZA</b>*251012*0000*U*00401*100000000*0*P*&gt;</div><div style="position:absolute;left:64px;top:192px;width:693px;height:18px;line-height:18px;font-family:'Liberation Serif',serif;font-size:12.15px;white-space:nowrap;color:#111;background:#b6def6;"><b style="color:#111">GS</b>*PO*006173082T*0987654321WXYZA*20251012*0000*100000000*X*005010</div><div style="position:absolute;left:76px;top:210px;width:681px;height:18px;line-height:18px;font-family:'Liberation Serif',serif;font-size:12.15px;white-space:nowrap;color:#5a5a5a;"><b style="color:#5a5a5a">ST</b>*<b style="color:#ee0000">850</b>*100000000</div><div style="position:absolute;left:88px;top:228px;width:669px;height:18px;line-height:18px;font-family:'Liberation Serif',serif;font-size:12.15px;white-space:nowrap;color:#5a5a5a;"><b style="color:#5a5a5a">BEG</b>*00*SA*1000000**20251012</div><div style="position:absolute;left:88px;top:246px;width:669px;height:18px;line-height:18px;font-family:'Liberation Serif',serif;font-size:12.15px;white-space:nowrap;color:#5a5a5a;"><b style="color:#5a5a5a">N1</b>*ST*•••••••••••••*92*••••••••••</div><div style="position:absolute;left:88px;top:264px;width:669px;height:18px;line-height:18px;font-family:'Liberation Serif',serif;font-size:12.15px;white-space:nowrap;color:#5a5a5a;"><b style="color:#5a5a5a">N3</b>*••••••••••••••</div><div style="position:absolute;left:88px;top:282px;width:669px;height:18px;line-height:18px;font-family:'Liberation Serif',serif;font-size:12.15px;white-space:nowrap;color:#5a5a5a;"><b style="color:#5a5a5a">N4</b>*••••••*••*•••••</div><div style="position:absolute;left:88px;top:300px;width:669px;height:18px;line-height:18px;font-family:'Liberation Serif',serif;font-size:12.15px;white-space:nowrap;color:#5a5a5a;background:#e4e7e8;"><b style="color:#5a5a5a">PO1</b>*1*10*EA*12.34**SK*TESTSKU123</div><div style="position:absolute;left:88px;top:318px;width:669px;height:18px;line-height:18px;font-family:'Liberation Serif',serif;font-size:12.15px;white-space:nowrap;color:#5a5a5a;"><b style="color:#5a5a5a">PID</b>*F****Yoga Mat with Carrying Strap</div><div style="position:absolute;left:88px;top:336px;width:669px;height:18px;line-height:18px;font-family:'Liberation Serif',serif;font-size:12.15px;white-space:nowrap;color:#5a5a5a;"><b style="color:#5a5a5a">CTT</b>*1*10</div><div style="position:absolute;left:76px;top:354px;width:681px;height:18px;line-height:18px;font-family:'Liberation Serif',serif;font-size:12.15px;white-space:nowrap;color:#5a5a5a;"><b style="color:#5a5a5a">SE</b>*8*100000000</div><div style="position:absolute;left:64px;top:372px;width:693px;height:18px;line-height:18px;font-family:'Liberation Serif',serif;font-size:12.15px;white-space:nowrap;color:#111;background:#b6def6;"><b style="color:#111">GE</b>*1*100000000</div><div style="position:absolute;left:52px;top:390px;width:705px;height:18px;line-height:18px;font-family:'Liberation Serif',serif;font-size:12.15px;white-space:nowrap;color:#111;background:#b6def6;"><b style="color:#111">IEA</b>*1*100000000</div><div style="position:absolute;left:68.5px;top:424.5px;width:277px;height:700px;border:1px solid #e2e4e6;border-radius:5px;background:#fff;box-sizing:border-box"><span class="t" style="left:12.10px;top:14.33px;font-size:14.4px;font-weight:bold;color:#111;font-family:'Liberation Sans',sans-serif;letter-spacing:-0.852px;">Related Docs</span><div style="position:absolute;left:11.85px;top:40.80px;width:251.65px;height:38.30px;box-sizing:border-box;border:1px solid #e0e2e4;border-radius:3.5px;background:#fff"></div><span class="t" style="left:21.35px;top:52.72px;font-size:14px;font-weight:bold;color:#2272d6;font-family:'Liberation Sans',sans-serif;letter-spacing:-0.693px;">Invoice</span><span class="t" style="left:86.55px;top:52.72px;font-size:14px;color:#141414;font-family:'Liberation Sans',sans-serif;letter-spacing:0.108px;">8/25/2025, 1:13:55 PM</span><div style="position:absolute;left:11.85px;top:83.80px;width:251.65px;height:38.30px;box-sizing:border-box;border:1px solid #e0e2e4;border-radius:3.5px;background:#fff"></div><span class="t" style="left:21.35px;top:95.72px;font-size:14px;font-weight:bold;color:#2272d6;font-family:'Liberation Sans',sans-serif;letter-spacing:-0.624px;">Shipment</span><span class="t" style="left:100.80px;top:95.72px;font-size:14px;color:#141414;font-family:'Liberation Sans',sans-serif;">8/25/2025, 1:10:42 PM</span><div style="position:absolute;left:11.85px;top:126.80px;width:251.65px;height:38.30px;box-sizing:border-box;border:1px solid #e0e2e4;border-radius:3.5px;background:#fff"></div><span class="t" style="left:21.35px;top:138.72px;font-size:14px;font-weight:bold;color:#2272d6;font-family:'Liberation Sans',sans-serif;letter-spacing:-0.676px;">Order Ack</span><span class="t" style="left:103.50px;top:138.72px;font-size:14px;color:#141414;font-family:'Liberation Sans',sans-serif;letter-spacing:0.098px;">8/25/2025, 12:46:55 PM</span><div style="position:absolute;left:11.85px;top:169.80px;width:251.65px;height:38.30px;box-sizing:border-box;border:1px solid #e0e2e4;border-radius:3.5px;background:#fff"></div><span class="t" style="left:21.35px;top:181.72px;font-size:14px;font-weight:bold;color:#2272d6;font-family:'Liberation Sans',sans-serif;letter-spacing:-0.906px;">Order</span><span class="t" style="left:75.90px;top:181.72px;font-size:14px;color:#141414;font-family:'Liberation Sans',sans-serif;">8/25/2025, 12:31:20 PM</span><div style="position:absolute;left:11.85px;top:212.80px;width:251.65px;height:38.30px;box-sizing:border-box;border:1px solid #e0e2e4;border-radius:3.5px;background:#fff"></div><span class="t" style="left:21.35px;top:224.72px;font-size:14px;font-weight:bold;color:#2272d6;font-family:'Liberation Sans',sans-serif;letter-spacing:-0.906px;">Order</span><span class="t" style="left:75.90px;top:224.72px;font-size:14px;color:#141414;font-family:'Liberation Sans',sans-serif;">8/25/2025, 12:31:16 PM</span><div style="position:absolute;left:11.85px;top:255.80px;width:251.65px;height:38.30px;box-sizing:border-box;border:1px solid #e0e2e4;border-radius:3.5px;background:#fff"></div><span class="t" style="left:21.35px;top:267.72px;font-size:14px;font-weight:bold;color:#2272d6;font-family:'Liberation Sans',sans-serif;letter-spacing:-0.906px;">Order</span><span class="t" style="left:75.90px;top:267.72px;font-size:14px;color:#141414;font-family:'Liberation Sans',sans-serif;">8/25/2025, 12:31:12 PM</span><div style="position:absolute;left:11.85px;top:298.80px;width:251.65px;height:38.30px;box-sizing:border-box;border:1px solid #e0e2e4;border-radius:3.5px;background:#fff"></div><span class="t" style="left:21.35px;top:310.72px;font-size:14px;font-weight:bold;color:#2272d6;font-family:'Liberation Sans',sans-serif;letter-spacing:-0.906px;">Order</span><span class="t" style="left:75.90px;top:310.72px;font-size:14px;color:#141414;font-family:'Liberation Sans',sans-serif;">8/25/2025, 12:31:08 PM</span><div style="position:absolute;left:11.85px;top:341.80px;width:251.65px;height:38.30px;box-sizing:border-box;border:1px solid #e0e2e4;border-radius:3.5px;background:#fff"></div><span class="t" style="left:21.35px;top:353.72px;font-size:14px;font-weight:bold;color:#2272d6;font-family:'Liberation Sans',sans-serif;letter-spacing:-0.906px;">Order</span><span class="t" style="left:75.90px;top:353.72px;font-size:14px;color:#141414;font-family:'Liberation Sans',sans-serif;">8/25/2025, 12:31:04 PM</span><div style="position:absolute;left:11.85px;top:384.80px;width:251.65px;height:38.30px;box-sizing:border-box;border:1px solid #e0e2e4;border-radius:3.5px;background:#fff"></div><span class="t" style="left:21.35px;top:396.72px;font-size:14px;font-weight:bold;color:#2272d6;font-family:'Liberation Sans',sans-serif;letter-spacing:-0.906px;">Order</span><span class="t" style="left:75.90px;top:396.72px;font-size:14px;color:#141414;font-family:'Liberation Sans',sans-serif;">8/25/2025, 12:31:03 PM</span><div style="position:absolute;left:11.85px;top:427.80px;width:251.65px;height:38.30px;box-sizing:border-box;border:1px solid #e0e2e4;border-radius:3.5px;background:#fff"></div><span class="t" style="left:21.35px;top:439.72px;font-size:14px;font-weight:bold;color:#2272d6;font-family:'Liberation Sans',sans-serif;letter-spacing:-0.906px;">Order</span><span class="t" style="left:75.90px;top:439.72px;font-size:14px;color:#141414;font-family:'Liberation Sans',sans-serif;">8/25/2025, 12:31:03 PM</span><div style="position:absolute;left:11.85px;top:470.80px;width:251.65px;height:38.30px;box-sizing:border-box;border:1px solid #e0e2e4;border-radius:3.5px;background:#fff"></div><span class="t" style="left:21.35px;top:482.72px;font-size:14px;font-weight:bold;color:#2272d6;font-family:'Liberation Sans',sans-serif;letter-spacing:-0.906px;">Order</span><span class="t" style="left:75.90px;top:482.72px;font-size:14px;color:#141414;font-family:'Liberation Sans',sans-serif;">8/25/2025, 12:31:03 PM</span><div style="position:absolute;left:11.85px;top:513.80px;width:251.65px;height:38.30px;box-sizing:border-box;border:1px solid #e0e2e4;border-radius:3.5px;background:#fff"></div><span class="t" style="left:21.35px;top:525.72px;font-size:14px;font-weight:bold;color:#2272d6;font-family:'Liberation Sans',sans-serif;letter-spacing:-0.906px;">Order</span><span class="t" style="left:75.90px;top:525.72px;font-size:14px;color:#141414;font-family:'Liberation Sans',sans-serif;">8/25/2025, 12:31:02 PM</span><div style="position:absolute;left:11.85px;top:556.80px;width:251.65px;height:38.30px;box-sizing:border-box;border:1px solid #e0e2e4;border-radius:3.5px;background:#fff"></div><span class="t" style="left:21.35px;top:568.72px;font-size:14px;font-weight:bold;color:#2272d6;font-family:'Liberation Sans',sans-serif;letter-spacing:-0.906px;">Order</span><span class="t" style="left:75.90px;top:568.72px;font-size:14px;color:#141414;font-family:'Liberation Sans',sans-serif;">8/25/2025, 12:31:02 PM</span><div style="position:absolute;left:11.85px;top:599.80px;width:251.65px;height:38.30px;box-sizing:border-box;border:1px solid #e0e2e4;border-radius:3.5px;background:#fff"></div><span class="t" style="left:21.35px;top:611.72px;font-size:14px;font-weight:bold;color:#2272d6;font-family:'Liberation Sans',sans-serif;letter-spacing:-0.906px;">Order</span><span class="t" style="left:75.90px;top:611.72px;font-size:14px;color:#141414;font-family:'Liberation Sans',sans-serif;">8/25/2025, 12:31:02 PM</span></div><div style="position:absolute;left:370.2px;top:424.5px;width:371px;height:700px;border:1px solid #e2e4e6;border-radius:5px;background:#fff;box-sizing:border-box"><span class="t" style="left:12.15px;top:14.33px;font-size:14.4px;font-weight:bold;color:#111;font-family:'Liberation Sans',sans-serif;letter-spacing:-0.758px;">Views</span><div style="position:absolute;left:12.15px;top:40.80px;width:344.30px;height:42.40px;box-sizing:border-box;border:1px solid #e0e2e4;border-radius:3.5px;background:#fff"></div><span class="t" style="left:21.10px;top:52.72px;font-size:14px;color:#141414;font-family:'Liberation Sans',sans-serif;letter-spacing:0.091px;">8/25/2025, 10:41:26 AM</span><span class="t" style="left:192.80px;top:52.72px;font-size:14px;font-weight:bold;color:#2272d6;font-family:'Liberation Sans',sans-serif;letter-spacing:-1.448px;">Raw</span></div></div></div></body></html>
